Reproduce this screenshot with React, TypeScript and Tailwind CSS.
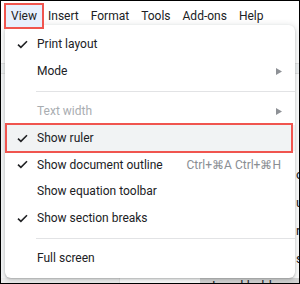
import React from 'react';

type Item = {
  label: string;
  checked?: boolean;
  disabled?: boolean;
  submenu?: boolean;
  shortcut?: string;
  highlight?: boolean;
};

const groups: Item[][] = [
  [
    { label: 'Print layout', checked: true },
    { label: 'Mode', submenu: true },
  ],
  [
    { label: 'Text width', disabled: true, submenu: true },
    { label: 'Show ruler', checked: true, highlight: true },
    { label: 'Show document outline', checked: true, shortcut: 'Ctrl+⌘A Ctrl+⌘H' },
    { label: 'Show equation toolbar' },
    { label: 'Show section breaks', checked: true },
  ],
  [{ label: 'Full screen' }],
];

const Check = () => (
  <svg width="11" height="9" viewBox="0 0 11 9" className="absolute left-[12px] top-[9px]">
    <path d="M1 4.6 L3.9 7.4 L10 1.2" fill="none" stroke="#202124" strokeWidth="1.6" />
  </svg>
);

const Arrow = () => (
  <svg width="6" height="7" viewBox="0 0 6 7" className="absolute right-[13px] top-[10px]">
    <polygon points="0,0 6,3.5 0,7" fill="#8e9196" />
  </svg>
);

const MenuRow: React.FC<{ item: Item }> = ({ item }) => (
  <div
    className={
      'relative flex h-[26.6px] items-center pl-[32px] text-[12px] ' +
      (item.highlight ? 'bg-[#f1f3f4] ' : '') +
      (item.disabled ? 'text-[#a9adb1]' : 'text-[#202124]')
    }
  >
    {item.checked && <Check />}
    <span>{item.label}</span>
    {item.submenu && <Arrow />}
    {item.shortcut && (
      <span className="absolute right-[14px] text-[12px] text-[#8a8e93]">{item.shortcut}</span>
    )}
    {item.highlight && (
      <span className="absolute left-0 right-[2px] top-[-2px] bottom-[-2px] border-2 border-[#f0554f]" />
    )}
  </div>
);

export default function App() {
  const menus = ['Insert', 'Format', 'Tools', 'Add-ons', 'Help'];
  return (
    <div className="relative flex h-[284px] w-[300px] flex-col overflow-hidden border border-black bg-white font-['Roboto','Liberation_Sans',sans-serif]">
      {/* menu bar */}
      <div className="flex h-[31px] shrink-0 items-start pt-[2px] text-[12px] text-[#202124]">
        <div className="relative z-10 ml-[3px] flex h-[26px] w-[40px] items-center justify-center border-2 border-[#f0554f] bg-[#e8f0fe]">
          View
        </div>
        <div className="ml-[4px] flex h-[26px] items-center gap-[12px]">
          {menus.map((m) => (
            <span key={m}>{m}</span>
          ))}
        </div>
      </div>

      {/* document behind the menu */}
      <div className="h-[31px] shrink-0 bg-white" />
      <div className="h-[11px] shrink-0 border-y border-[#e3e3e3] bg-[#f1f3f4]" />
      <div className="flex min-h-0 flex-1 flex-col">
        <div className="flex min-h-0 flex-1">
          <div className="w-[119px] border-r border-[#e6e6e6] bg-[#f8f9fa]" />
          <div className="flex-1 bg-white" />
          <div className="w-[3px] overflow-hidden pt-[87px] text-[13px] leading-[28px] text-[#202124]">
            <div>o</div>
            <div>u</div>
            <div>r</div>
            <div>s</div>
          </div>
        </div>
        <div className="flex h-[5px] shrink-0">
          <div className="w-[119px] border-r border-[#e6e6e6] bg-[#f1f1f1]" />
          <div className="w-[80px] bg-white" />
          <div className="flex-1 overflow-hidden bg-[#d6d6d6] pl-[12px] text-[13px] leading-[16px] text-[#202124]">
            Israel holds the
          </div>
        </div>
      </div>

      {/* View dropdown */}
      <div className="absolute left-[4px] top-[24px] w-[290px] rounded-[6px] bg-white pt-[6px] pb-[6px] shadow-[0_2px_6px_2px_rgba(60,64,67,0.15),0_1px_2px_rgba(60,64,67,0.3)]">
        {groups.map((g, gi) => (
          <div key={gi}>
            {gi > 0 && <div className="my-[6.5px] ml-[31px] h-px bg-[#e2e3e5]" />}
            {g.map((it) => (
              <MenuRow key={it.label} item={it} />
            ))}
          </div>
        ))}
      </div>
    </div>
  );
}
